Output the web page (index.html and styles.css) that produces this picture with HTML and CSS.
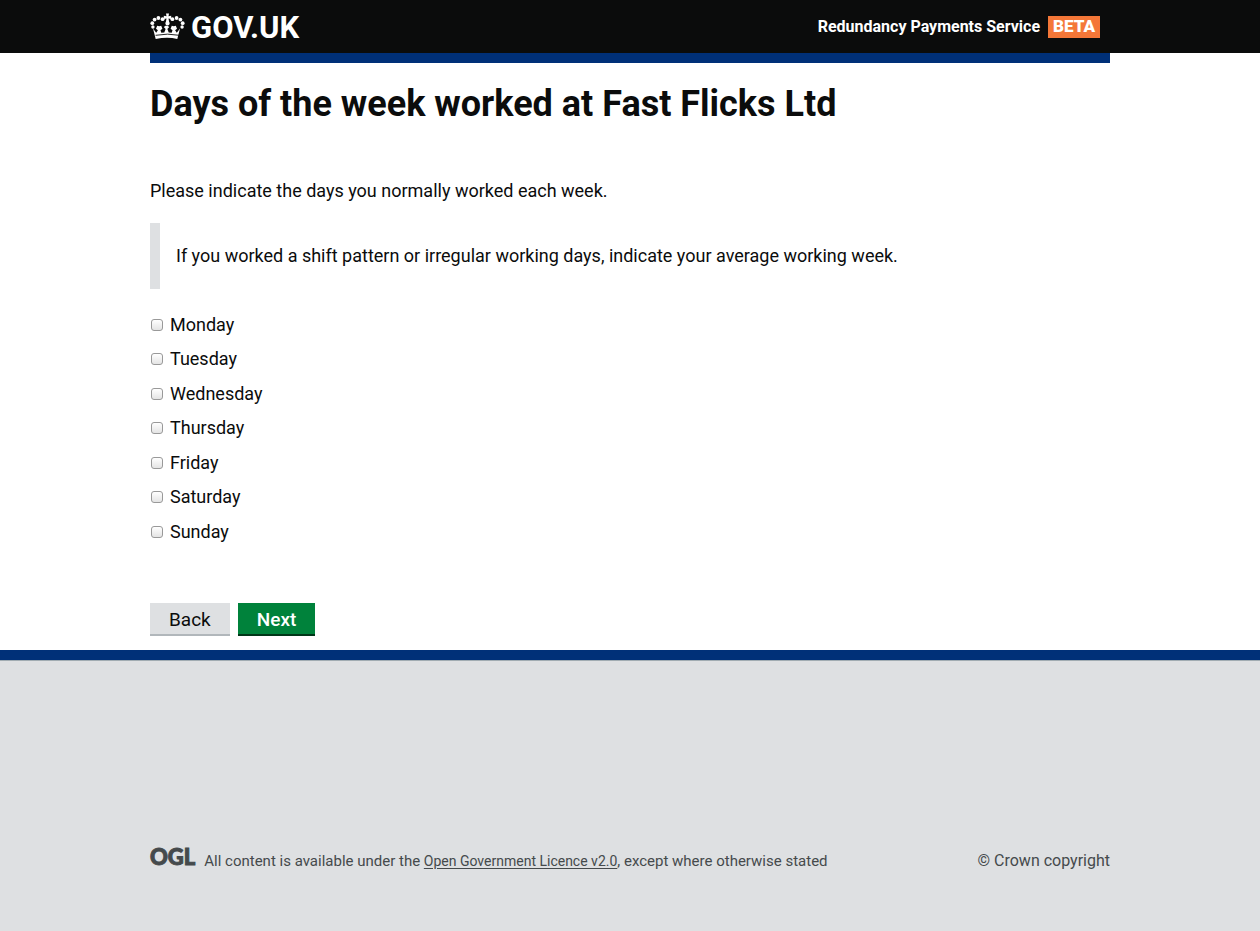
FILE: index.html
```html
<!DOCTYPE html>
<html lang="en">
<head>
<meta charset="utf-8">
<meta name="viewport" content="width=device-width, initial-scale=1">
<title>Days of the week worked at Fast Flicks Ltd</title>
<link rel="stylesheet" href="styles.css">
</head>
<body>
<header class="site-header">
  <div class="container header-row">
    <a class="brand" href="#">
      <svg class="crown" viewBox="0 0 35 28" width="35" height="28" aria-hidden="true">
        <g fill="currentColor">
          <path d="M16 .5h3l-.5 2.700 2.700-.5v3.200l-2.700-.5.8 4.600h-3.600l.8-4.600-2.700.5v-3.200l2.700.5z"/>
          <circle cx="17.500" cy="10.400" r="2.100"/>
          <circle cx="12.600" cy="6.200" r="1.900"/><circle cx="8.400" cy="5" r="1.900"/><circle cx="4.600" cy="6.600" r="1.900"/><circle cx="2.300" cy="10.200" r="1.900"/><circle cx="2.900" cy="14" r="1.700"/>
          <circle cx="22.400" cy="6.200" r="1.900"/><circle cx="26.600" cy="5" r="1.900"/><circle cx="30.400" cy="6.600" r="1.900"/><circle cx="32.700" cy="10.200" r="1.900"/><circle cx="32.100" cy="14" r="1.700"/>
          <path d="M3 15.500l3.200 4.300 1.700-2.600-1.900-1.500 1.200-3 2 .6 2-.6 1.200 3-1.900 1.500.8 2.600 3-.2 1.300-3.600-1.800-2 1.700-1.200h2l1.700 1.200-1.800 2 1.300 3.600 3 .2.800-2.600-1.900-1.500 1.200-3 2 .6 2-.6 1.200 3-1.900 1.500 1.700 2.600 3.200-4.300-2.700 10.500Q17.500 23.600 5.700 26z"/>
        </g>
        <path d="M5.600 22.300Q17.500 20 29.400 22.300" fill="none" stroke="#0b0c0c" stroke-width=".9"/>
      </svg>
      <span class="brand-name">GOV.UK</span>
    </a>
    <div class="service">
      <span class="service-name">Redundancy Payments Service</span>
      <strong class="phase">BETA</strong>
    </div>
  </div>
</header>
<main class="container main">
  <h1 class="title">Days of the week worked at Fast Flicks Ltd</h1>
  <p class="intro">Please indicate the days you normally worked each week.</p>
  <p class="inset">If you worked a shift pattern or irregular working days, indicate your average working week.</p>
  <form class="days-form">
    <ul class="days">
      <li class="day"><label class="day-label"><input class="tick" type="checkbox">Monday</label></li>
      <li class="day"><label class="day-label"><input class="tick" type="checkbox">Tuesday</label></li>
      <li class="day"><label class="day-label"><input class="tick" type="checkbox">Wednesday</label></li>
      <li class="day"><label class="day-label"><input class="tick" type="checkbox">Thursday</label></li>
      <li class="day"><label class="day-label"><input class="tick" type="checkbox">Friday</label></li>
      <li class="day"><label class="day-label"><input class="tick" type="checkbox">Saturday</label></li>
      <li class="day"><label class="day-label"><input class="tick" type="checkbox">Sunday</label></li>
    </ul>
    <div class="actions">
      <button class="button button-back" type="button">Back</button>
      <button class="button button-next" type="button">Next</button>
    </div>
  </form>
</main>
<footer class="site-footer">
  <div class="container footer-row">
    <div class="licence">
      <span class="ogl">OGL</span>
      <p class="licence-text">All content is available under the <a class="licence-link" href="#">Open Government Licence v2.0</a>, except where otherwise stated</p>
    </div>
    <span class="copyright">© Crown copyright</span>
  </div>
</footer>
</body>
</html>
```
FILE: styles.css
```css
* {
  box-sizing: border-box;
}

body {
  margin: 0;
  min-height: 100vh;
  display: flex;
  flex-direction: column;
  background: #fff;
  color: #0b0c0c;
  font-family: Roboto, "Liberation Sans", sans-serif;
  font-size: 18px;
  font-weight: 450;
  line-height: 25px;
}

.container {
  width: 100%;
  max-width: 960px;
  margin: 0 auto;
}

.site-header {
  background: #0b0c0c;
  color: #fff;
}

.header-row {
  display: flex;
  justify-content: space-between;
  align-items: center;
  padding: 10px 10px 10px 0;
}

.brand {
  display: flex;
  align-items: center;
  gap: 6px;
  color: #fff;
  text-decoration: none;
}

.brand-name {
  padding-top: 2px;
  font-size: 31px;
  line-height: 31px;
  font-weight: 700;
}

.service {
  display: flex;
  align-items: center;
  gap: 8px;
  font-size: 16px;
  font-weight: 700;
}

.phase {
  padding: 0 5px 2px;
  background: #f47738;
  line-height: 20px;
  font-size: 17px;
}

.main {
  border-top: 10px solid #003078;
  padding: 21px 0 14px;
}

.title {
  margin: 0 0 54px;
  font-size: 36px;
  line-height: 40px;
  font-weight: 700;
}

.intro {
  margin: 0 0 20px;
}

.inset {
  margin: 0 0 23px;
  padding: 20px 16px 21px;
  border-left: 10px solid #dee0e2;
}

.days {
  margin: 0;
  padding: 0;
  list-style: none;
}

.day {
  margin-bottom: 9px;
}

.day:nth-child(even) {
  margin-bottom: 10px;
}

.day-label {
  display: inline-flex;
  align-items: center;
  gap: 7px;
}

.tick {
  appearance: none;
  width: 12px;
  height: 12px;
  margin: 1px 0 0 1px;
  border: 1px solid #999;
  border-radius: 3px;
  background: linear-gradient(#fff, #e4e4e4);
}

.tick:checked {
  background: #003078;
}

.actions {
  display: flex;
  gap: 8px;
  padding-top: 50px;
}

.button {
  border: 0;
  border-bottom: 2px solid;
  padding: 4px 19px 2px;
  font: inherit;
  font-size: 19px;
}

.button-back {
  background: #dee0e2;
  border-color: #b1b7bb;
  color: #0b0c0c;
  font-weight: 400;
}

.button-next {
  background: #00823b;
  border-color: #003618;
  color: #fff;
  font-weight: 500;
}

.site-footer {
  flex: 1;
  display: flex;
  align-items: flex-end;
  padding-bottom: 60px;
  border-top: 10px solid #003078;
  background: #dee0e2;
  box-shadow: inset 0 1px #a1acb2;
  color: #454a4c;
  font-size: 16px;
  font-weight: 400;
  line-height: 20px;
}

.footer-row {
  display: flex;
  justify-content: space-between;
  align-items: flex-end;
}

.licence {
  display: flex;
  align-items: flex-end;
  gap: 9px;
}

.ogl {
  padding-bottom: 4px;
  font-family: Lato, sans-serif;
  font-size: 22px;
  font-weight: 900;
  line-height: 20px;
  -webkit-text-stroke: 1px currentColor;
}

.licence-text {
  margin: 0;
  font-size: 15px;
  font-weight: 450;
}

.licence-link {
  color: inherit;
  font-size: 14px;
  font-weight: 400;
  text-underline-offset: 2px;
}
```
